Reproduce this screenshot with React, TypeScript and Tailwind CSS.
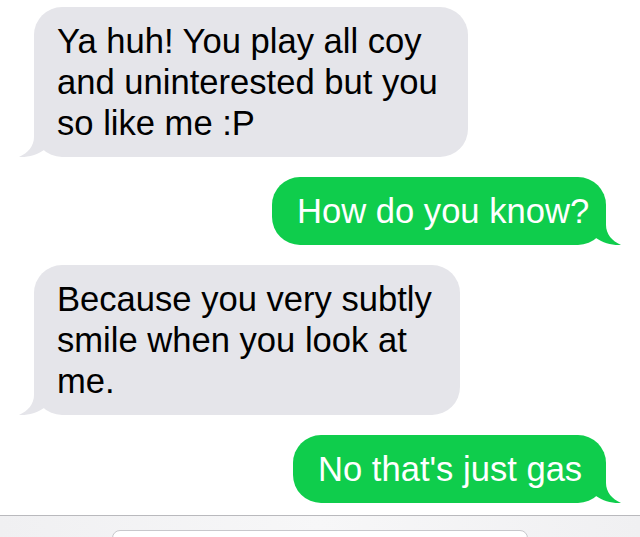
import React from "react";

const GRAY = "#e5e5ea";
const GREEN = "#0fcd4c";

function Tail({ side, color }: { side: "left" | "right"; color: string }) {
  // iOS-style bubble tail, drawn at the bubble's bottom corner
  const d = "M15 0 L15 8 C15 17 9 24 0 28 C9 28.5 18 26 25 21 L32 21 L32 0 Z";
  return (
    <svg
      width="32"
      height="29"
      viewBox="0 0 32 29"
      className={
        side === "left"
          ? "absolute bottom-[-1px] left-[-15px]"
          : "absolute bottom-[-1px] right-[-15px] -scale-x-100"
      }
    >
      <path d={d} fill={color} />
    </svg>
  );
}

function Bubble({
  lines,
  mine,
  width,
}: {
  lines: string[];
  mine?: boolean;
  width: string;
}) {
  return (
    <div className={mine ? "flex justify-end pr-[34px]" : "flex justify-start pl-[34px]"}>
      <div
        className={
          "relative rounded-[28px] pt-[14px] pb-[13px] text-[34.6px] leading-[41px] whitespace-nowrap " +
          width +
          (mine ? " bg-[#0fcd4c] pl-[25px] text-white" : " bg-[#e5e5ea] pl-[23px] text-black")
        }
      >
        {lines.map((l, i) => (
          <div key={i} className="relative z-10">
            {l}
          </div>
        ))}
        <Tail side={mine ? "right" : "left"} color={mine ? GREEN : GRAY} />
      </div>
    </div>
  );
}

export default function App() {
  return (
    <div
      className="flex h-[537px] w-[640px] flex-col overflow-hidden bg-white"
      style={{ fontFamily: '"Liberation Sans", Arial, sans-serif' }}
    >
      <div className="flex flex-col gap-[20px] pt-[7px]">
        <Bubble
          width="w-[434px]"
          lines={["Ya huh! You play all coy", "and uninterested but you", "so like me :P"]}
        />
        <Bubble mine width="w-[334px]" lines={["How do you know?"]} />
        <Bubble
          width="w-[426px]"
          lines={["Because you very subtly", "smile when you look at", "me."]}
        />
        <Bubble mine width="w-[313px]" lines={["No that's just gas"]} />
      </div>

      {/* compose bar */}
      <div className="mt-[12px] flex-1 border-t border-[#b9b9bd] bg-gradient-to-r from-[#f0f0f2] via-[#f7f7f8] to-[#f0f0f2] pl-[112px] pt-[14px]">
        <div className="h-[40px] w-[416px] rounded-[8px] border border-[#c8c8cc] bg-white" />
      </div>
    </div>
  );
}
